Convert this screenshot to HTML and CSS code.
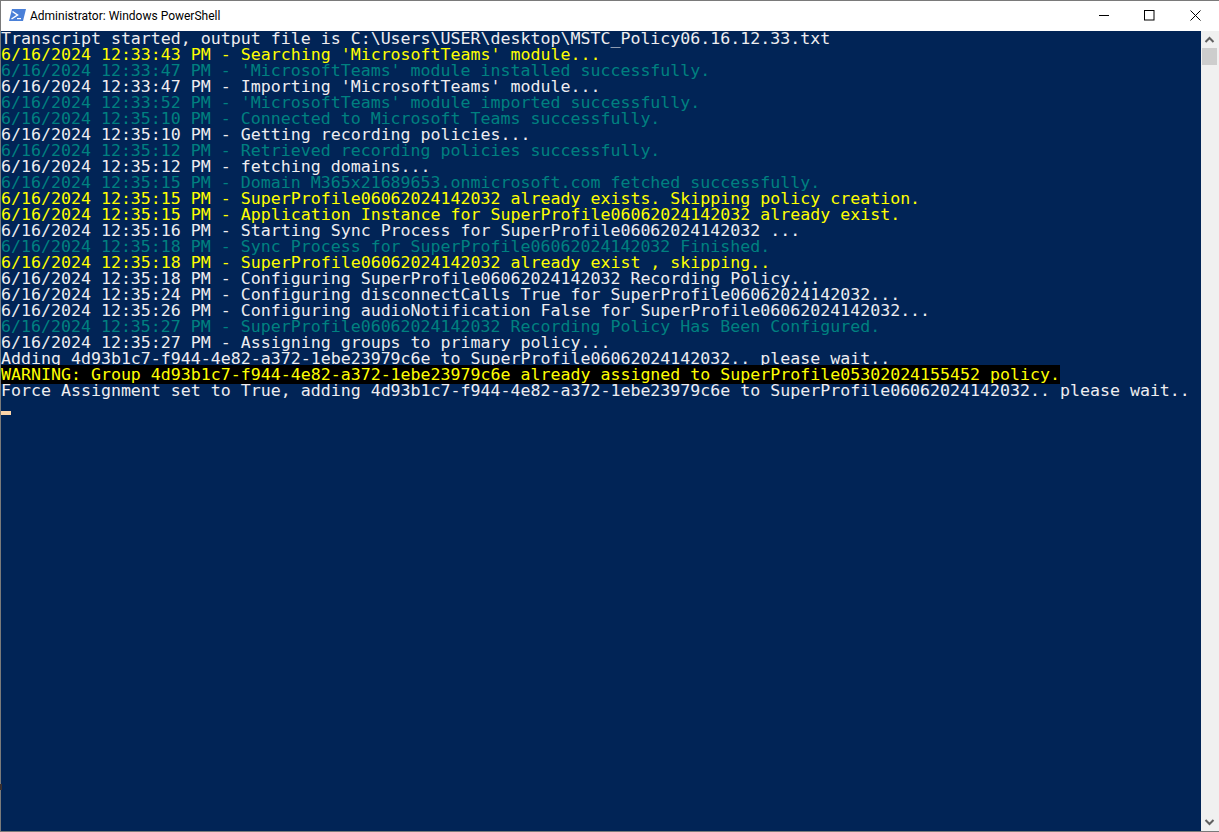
FILE: index.html
```html
<!DOCTYPE html>
<html lang="en">
<head>
<meta charset="utf-8">
<title>Administrator: Windows PowerShell</title>
<link rel="stylesheet" href="styles.css">
</head>
<body>
<div class="window">
  <header class="titlebar">
    <div class="title-left">
      <svg class="ps-icon" width="17" height="13" viewBox="0 0 17 13"><polygon points="3,0 17,0 14,12 0,12" fill="#4a80d8"/><path d="M3.5 2.5l5 3.5-6 4" fill="none" stroke="#fff" stroke-width="1.5"/><rect x="8" y="9" width="4" height="1.2" fill="#fff"/></svg>
      <span class="title-text">Administrator: Windows PowerShell</span>
    </div>
    <div class="controls">
      <div class="ctl"><svg width="11" height="11" viewBox="0 0 11 11"><rect x="0" y="5" width="10" height="1" fill="#000"/></svg></div>
      <div class="ctl"><svg width="11" height="11" viewBox="0 0 11 11"><rect x="0.5" y="0.5" width="9.5" height="9.5" fill="none" stroke="#000"/></svg></div>
      <div class="ctl ctl-close"><svg width="11" height="11" viewBox="0 0 11 11"><path d="M0.5 0.5l10 10M10.5 0.5l-10 10" stroke="#000" fill="none"/></svg></div>
    </div>
  </header>
  <div class="body">
    <main class="console">
<div class="ln w">Transcript started, output file is C:\Users\USER\desktop\MSTC_Policy06.16.12.33.txt</div>
<div class="ln y">6/16/2024 12:33:43 PM - Searching 'MicrosoftTeams' module...</div>
<div class="ln t">6/16/2024 12:33:47 PM - 'MicrosoftTeams' module installed successfully.</div>
<div class="ln w">6/16/2024 12:33:47 PM - Importing 'MicrosoftTeams' module...</div>
<div class="ln t">6/16/2024 12:33:52 PM - 'MicrosoftTeams' module imported successfully.</div>
<div class="ln t">6/16/2024 12:35:10 PM - Connected to Microsoft Teams successfully.</div>
<div class="ln w">6/16/2024 12:35:10 PM - Getting recording policies...</div>
<div class="ln t">6/16/2024 12:35:12 PM - Retrieved recording policies successfully.</div>
<div class="ln w">6/16/2024 12:35:12 PM - fetching domains...</div>
<div class="ln t">6/16/2024 12:35:15 PM - Domain M365x21689653.onmicrosoft.com fetched successfully.</div>
<div class="ln y">6/16/2024 12:35:15 PM - SuperProfile06062024142032 already exists. Skipping policy creation.</div>
<div class="ln y">6/16/2024 12:35:15 PM - Application Instance for SuperProfile06062024142032 already exist.</div>
<div class="ln w">6/16/2024 12:35:16 PM - Starting Sync Process for SuperProfile06062024142032 ...</div>
<div class="ln t">6/16/2024 12:35:18 PM - Sync Process for SuperProfile06062024142032 Finished.</div>
<div class="ln y">6/16/2024 12:35:18 PM - SuperProfile06062024142032 already exist , skipping..</div>
<div class="ln w">6/16/2024 12:35:18 PM - Configuring SuperProfile06062024142032 Recording Policy...</div>
<div class="ln w">6/16/2024 12:35:24 PM - Configuring disconnectCalls True for SuperProfile06062024142032...</div>
<div class="ln w">6/16/2024 12:35:26 PM - Configuring audioNotification False for SuperProfile06062024142032...</div>
<div class="ln t">6/16/2024 12:35:27 PM - SuperProfile06062024142032 Recording Policy Has Been Configured.</div>
<div class="ln w">6/16/2024 12:35:27 PM - Assigning groups to primary policy...</div>
<div class="ln w">Adding 4d93b1c7-f944-4e82-a372-1ebe23979c6e to SuperProfile06062024142032.. please wait..</div>
<div class="ln"><span class="warn">WARNING: Group 4d93b1c7-f944-4e82-a372-1ebe23979c6e already assigned to SuperProfile05302024155452 policy.</span></div>
<div class="ln w">Force Assignment set to True, adding 4d93b1c7-f944-4e82-a372-1ebe23979c6e to SuperProfile06062024142032.. please wait..</div>
<div class="ln"><span class="cursor"></span></div>
    </main>
    <aside class="scrollbar">
      <svg class="arrow" width="15" height="17" viewBox="0 0 15 17"><path d="M3.5 11l4-4 4 4" fill="none" stroke="#606060" stroke-width="2"/></svg>
      <div class="thumb"></div>
      <div class="track"></div>
      <svg class="arrow" width="15" height="17" viewBox="0 0 15 17"><path d="M3.5 6l4 4 4-4" fill="none" stroke="#606060" stroke-width="2"/></svg>
    </aside>
  </div>
  <div class="edge-mark"></div>
</div>
</body>
</html>
```
FILE: styles.css
```css
html, body { margin: 0; padding: 0; height: 100%; overflow: hidden; background: #fff; }
.window {
  position: relative;
  box-sizing: border-box;
  width: 1219px;
  height: 832px;
  border: 1px solid #7a7a7a;
  border-right: none;
  display: flex;
  flex-direction: column;
}
.titlebar {
  box-sizing: border-box;
  height: 30px;
  flex: none;
  padding-bottom: 1px;
  background: #fff;
  display: flex;
  justify-content: space-between;
  align-items: center;
}
.title-left { display: flex; align-items: center; gap: 4px; padding-left: 8px; }
.title-text { font: 12px Roboto, "Liberation Sans", sans-serif; color: #000; }
.controls { display: flex; padding-right: 1px; }
.ctl { width: 45px; height: 29px; display: flex; align-items: center; justify-content: center; }
.ctl-close { margin-left: 1px; }
.body { flex: 1; display: flex; min-height: 0; }
.console {
  flex: 1;
  background: #012456;
  font-family: "DejaVu Sans Mono", monospace;
  font-size: 16.6px;
  line-height: 16px;
}
.ln { height: 16px; white-space: pre; }
.w { color: #eeedf0; }
.y { color: #ffff00; }
.t { color: #008080; }
.warn { background: #000; color: #ffff00; }
.cursor { display: inline-block; width: 10px; height: 4px; background: #fdd5a8; vertical-align: top; margin-top: 12px; }
.scrollbar {
  box-sizing: border-box;
  width: 18px;
  flex: none;
  padding: 0 2px 0 1px;
  background: #f0f0f0;
  display: flex;
  flex-direction: column;
}
.arrow { flex: none; display: block; }
.thumb { height: 17px; background: #cdcdcd; flex: none; }
.track { flex: 1; }
.edge-mark { position: absolute; left: -1px; top: 783px; width: 2px; height: 6px; background: #3a3030; }
```
